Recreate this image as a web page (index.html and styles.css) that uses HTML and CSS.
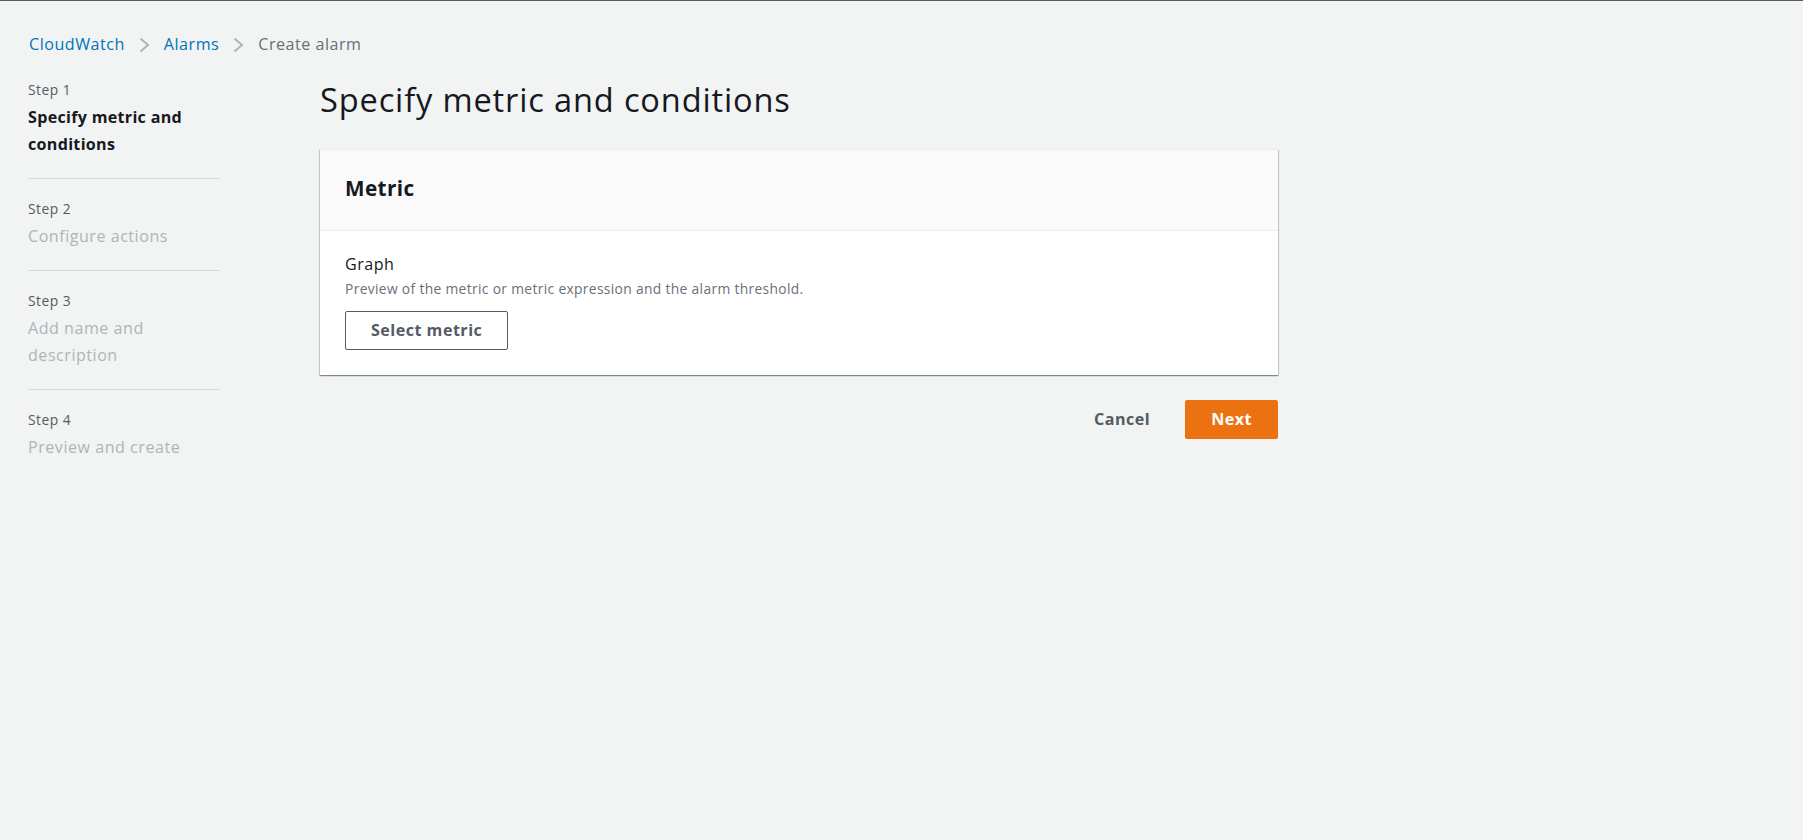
FILE: index.html
```html
<!DOCTYPE html>
<html lang="en">
<head>
<meta charset="utf-8">
<title>Create alarm | CloudWatch</title>
<link rel="stylesheet" href="styles.css">
</head>
<body>
<div class="page">
  <nav class="breadcrumbs">
    <a class="crumb-link" href="#">CloudWatch</a>
    <svg class="chev" viewBox="0 0 11 16" width="11" height="16"><path d="M1.5 1.5l7.5 6.5-7.5 6.5" fill="none" stroke="#aab7b8" stroke-width="2"/></svg>
    <a class="crumb-link" href="#">Alarms</a>
    <svg class="chev" viewBox="0 0 11 16" width="11" height="16"><path d="M1.5 1.5l7.5 6.5-7.5 6.5" fill="none" stroke="#aab7b8" stroke-width="2"/></svg>
    <span class="crumb-current">Create alarm</span>
  </nav>
  <div class="layout">
    <ol class="steps">
      <li class="step">
        <div class="step-label">Step 1</div>
        <div class="step-title active">Specify metric and conditions</div>
      </li>
      <li class="step">
        <div class="step-label">Step 2</div>
        <div class="step-title">Configure actions</div>
      </li>
      <li class="step">
        <div class="step-label">Step 3</div>
        <div class="step-title">Add name and description</div>
      </li>
      <li class="step last">
        <div class="step-label">Step 4</div>
        <div class="step-title">Preview and create</div>
      </li>
    </ol>
    <main class="main">
      <h1 class="title">Specify metric and conditions</h1>
      <section class="card">
        <header class="card-header"><h2 class="card-title">Metric</h2></header>
        <div class="card-body">
          <div class="field-label">Graph</div>
          <div class="field-desc">Preview of the metric or metric expression and the alarm threshold.</div>
          <button class="btn btn-normal">Select metric</button>
        </div>
      </section>
      <div class="actions">
        <button class="btn btn-link">Cancel</button>
        <button class="btn btn-primary">Next</button>
      </div>
    </main>
  </div>
</div>
</body>
</html>
```
FILE: styles.css
```css
html, body {
  margin: 0;
  padding: 0;
}
body {
  background: #f2f3f3;
  border-top: 1px solid #545b64;
  font-family: "Open Sans", "Noto Sans", Arial, sans-serif;
  color: #16191f;
  letter-spacing: 0.032em;
  min-height: 839px;
}
.page {
  padding: 32px 28px 0 28px;
}
.breadcrumbs {
  display: flex;
  align-items: center;
  font-size: 16.1px;
  line-height: 23px;
  gap: 14px;
  padding-left: 1px;
}
.crumb-link {
  color: #0073bb;
  text-decoration: none;
}
.crumb-current {
  color: #687078;
}
.chev {
  display: block;
}
.layout {
  display: flex;
  align-items: flex-start;
  gap: 100px;
  margin-top: 21px;
}
.steps {
  list-style: none;
  margin: 4px 0 0 0;
  padding: 0;
  width: 192px;
  flex: none;
}
.step {
  padding: 21px 0 19.5px 0;
  border-bottom: 1px solid #d5dbdb;
}
.step:first-child {
  padding-top: 0;
}
.step.last {
  border-bottom: none;
}
.step-label {
  font-size: 13.8px;
  line-height: 18.4px;
  color: #545b64;
}
.step-title {
  margin-top: 5px;
  font-size: 16.1px;
  line-height: 27px;
  color: #aab7b8;
}
.step-title.active {
  color: #16191f;
  font-weight: 700;
  letter-spacing: 0.018em;
}
.main {
  width: 958px;
  flex: none;
}
.title {
  margin: 0;
  font-size: 32.6px;
  line-height: 46px;
  font-weight: 400;
  letter-spacing: 0.026em;
  color: #16191f;
}
.card {
  margin-top: 26px;
  background: #fff;
  border-top: 1px solid #eaeded;
  box-shadow: 0 1px 1px 0 rgba(0, 28, 36, 0.3), 1px 1px 1px 0 rgba(0, 28, 36, 0.15), -1px 1px 1px 0 rgba(0, 28, 36, 0.15);
}
.card-header {
  background: #fafafa;
  border-bottom: 1px solid #eaeded;
  padding: 24px 25px 27px 25px;
}
.card-title {
  margin: 0;
  font-size: 20.7px;
  line-height: 29px;
  font-weight: 700;
  letter-spacing: 0.02em;
}
.card-body {
  padding: 18px 25px 25px 25px;
}
.field-label {
  font-size: 16.1px;
  line-height: 31px;
  color: #16191f;
}
.field-desc {
  font-size: 13.8px;
  line-height: 18.4px;
  color: #687078;
  letter-spacing: 0.025em;
}
.btn {
  font-family: inherit;
  font-size: 16.1px;
  font-weight: 700;
  letter-spacing: 0.03em;
  height: 39px;
  border-radius: 2px;
  cursor: pointer;
  box-sizing: border-box;
}
.btn-normal {
  margin-top: 12.5px;
  background: #fff;
  color: #545b64;
  border: 1px solid #545b64;
  padding: 0 25px;
}
.actions {
  display: flex;
  justify-content: flex-end;
  align-items: center;
  margin-top: 25px;
  gap: 11px;
}
.btn-link {
  background: transparent;
  border: 1px solid transparent;
  color: #545b64;
  padding: 0 23px;
}
.btn-primary {
  background: #ec7211;
  border: 1px solid #ec7211;
  color: #fff;
  padding: 0 25px;
}
```
